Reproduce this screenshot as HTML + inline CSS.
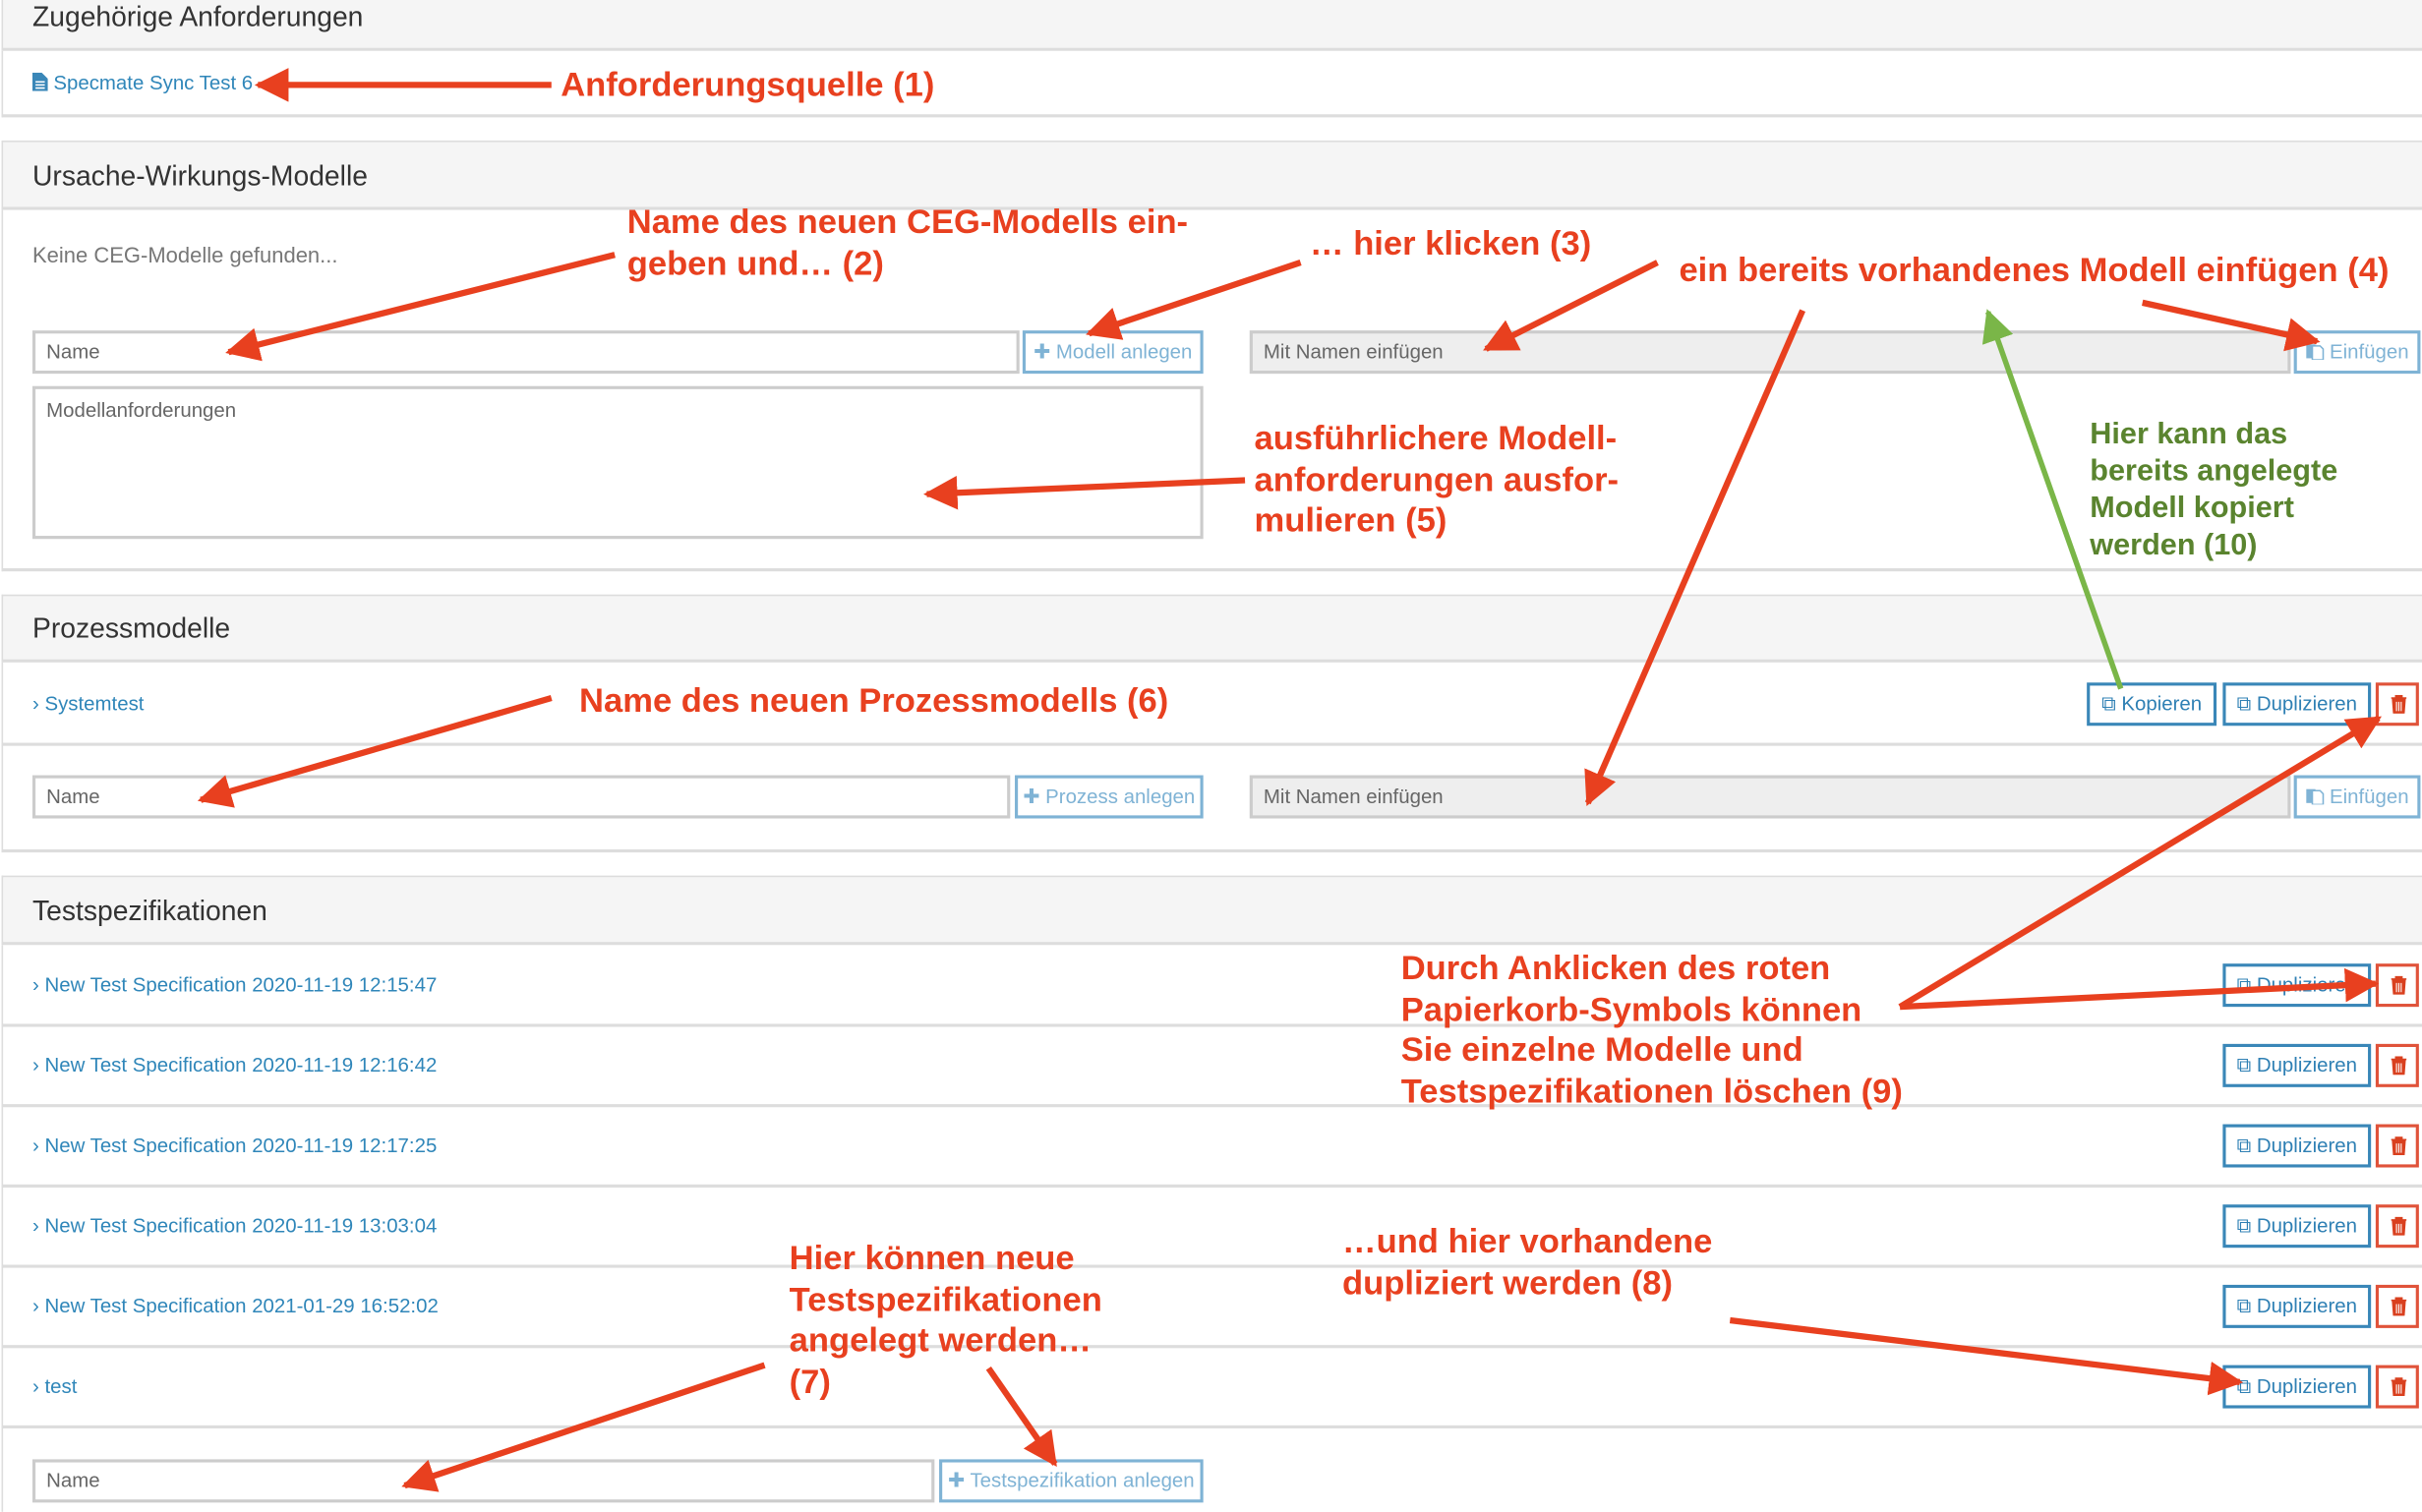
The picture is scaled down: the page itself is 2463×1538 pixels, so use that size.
<!DOCTYPE html>
<html><head><meta charset="utf-8">
<style>
html,body{margin:0;padding:0;background:#fff;overflow:hidden;width:2463px;height:1538px}
#w{position:absolute;left:0;top:0;width:1568px;height:979px;transform:scale(1.5708);transform-origin:0 0;font-family:"Liberation Sans",sans-serif;font-size:13px;color:#333}
.a{position:absolute}
.hd{position:absolute;left:1px;right:0;background:#f5f5f5;border-top:1px solid #ddd;border-bottom:2px solid #ddd;border-left:1px solid #ddd;font-size:18px;color:#333;padding-left:19px;box-sizing:border-box}
.bd{position:absolute;left:1px;right:0;border-left:1px solid #ddd;border-bottom:2px solid #ddd;background:#fff}
.ln{position:absolute;left:1px;right:0;height:2px;background:#ddd}
.lk{position:absolute;color:#2f86b9;font-size:13px}
.in{position:absolute;border:2px solid #ccc;box-sizing:border-box;color:#666;font-size:13px;padding-left:7px;line-height:23px;background:#fff}
.gr{background:#eee}
.bt{position:absolute;border:2px solid #7fb3d5;box-sizing:border-box;color:#7fb3d5;font-size:13px;text-align:center;line-height:23px;background:#fff}
.bb{position:absolute;border:2px solid #3a87b8;box-sizing:border-box;color:#2f80b4;font-size:13px;text-align:center;line-height:23px;background:#fff}
.tr{position:absolute;border:2px solid #e0533a;box-sizing:border-box;text-align:center;background:#fff;width:28px;height:28px}
.tr svg{position:absolute;left:8px;top:6px}
.an{position:absolute;color:#e8401f;font-weight:bold;font-size:22px;line-height:26.5px;white-space:nowrap}
.gn{position:absolute;color:#5a842f;font-weight:bold;font-size:19.5px;line-height:24px;white-space:nowrap}
</style></head><body><div id="w">

<div class="hd" style="top:-1px;height:34px;line-height:22px">Zugehörige Anforderungen</div>
<div class="bd" style="top:33px;height:41px"></div>
<div class="lk" style="left:21px;top:46px"><svg width="10" height="12" viewBox="0 0 10 12" style="vertical-align:-1px"><path d="M0 0h6l4 4v8H0z" fill="#3a87b8"/><path d="M2 6h6M2 8h6M2 10h6" stroke="#fff" stroke-width="1"/></svg> Specmate Sync Test 6</div>

<div class="hd" style="top:91px;height:45px;line-height:44px">Ursache-Wirkungs-Modelle</div>
<div class="bd" style="top:136px;height:232px"></div>
<div class="a" style="left:21px;top:157px;color:#777;font-size:14px">Keine CEG-Modelle gefunden...</div>
<div class="in" style="left:21px;top:214px;width:639px;height:28px">Name</div>
<div class="bt" style="left:662px;top:214px;width:117px;height:28px">✚ Modell anlegen</div>
<div class="in gr" style="left:809px;top:214px;width:674px;height:28px">Mit Namen einfügen</div>
<div class="bt" style="left:1485px;top:214px;width:82px;height:28px"><svg width="12" height="12" viewBox="0 0 12 12" style="vertical-align:-1px"><rect x="0" y="2" width="6" height="9" fill="#7fb3d5"/><path d="M4 3h5l2 2v7H4z" fill="#fff" stroke="#7fb3d5"/></svg> Einfügen</div>
<div class="in" style="left:21px;top:250px;width:758px;height:99px;line-height:28px">Modellanforderungen</div>

<div class="hd" style="top:385px;height:44px;line-height:43px">Prozessmodelle</div>
<div class="bd" style="top:429px;height:121px"></div>
<div class="ln" style="top:481px"></div>
<div class="lk" style="left:21px;top:448px">› Systemtest</div>
<div class="bb" style="left:1351px;top:442px;width:84px;height:28px">⧉ Kopieren</div>
<div class="bb" style="left:1439px;top:442px;width:96px;height:28px">⧉ Duplizieren</div>
<div class="tr" style="left:1538px;top:442px"><svg width="10" height="12" viewBox="0 0 10 12"><path d="M0 2h10M3 2V0.5h4V2M1 3h8l-0.7 9H1.7z" fill="#d9401f" stroke="#d9401f" stroke-width="1"/><path d="M3.5 4.5v6M5 4.5v6M6.5 4.5v6" stroke="#fff" stroke-width="0.7"/></svg></div>
<div class="in" style="left:21px;top:502px;width:633px;height:28px">Name</div>
<div class="bt" style="left:657px;top:502px;width:122px;height:28px">✚ Prozess anlegen</div>
<div class="in gr" style="left:809px;top:502px;width:674px;height:28px">Mit Namen einfügen</div>
<div class="bt" style="left:1485px;top:502px;width:82px;height:28px"><svg width="12" height="12" viewBox="0 0 12 12" style="vertical-align:-1px"><rect x="0" y="2" width="6" height="9" fill="#7fb3d5"/><path d="M4 3h5l2 2v7H4z" fill="#fff" stroke="#7fb3d5"/></svg> Einfügen</div>

<div class="hd" style="top:567px;height:45px;line-height:44px">Testspezifikationen</div>
<div class="bd" style="top:612px;height:367px;border-bottom:none"></div>
<div class="ln" style="top:663px"></div><div class="ln" style="top:715px"></div><div class="ln" style="top:767px"></div><div class="ln" style="top:819px"></div><div class="ln" style="top:871px"></div><div class="ln" style="top:923px"></div>
<div class="lk" style="left:21px;top:630px">› New Test Specification 2020-11-19 12:15:47</div>
<div class="lk" style="left:21px;top:682px">› New Test Specification 2020-11-19 12:16:42</div>
<div class="lk" style="left:21px;top:734px">› New Test Specification 2020-11-19 12:17:25</div>
<div class="lk" style="left:21px;top:786px">› New Test Specification 2020-11-19 13:03:04</div>
<div class="lk" style="left:21px;top:838px">› New Test Specification 2021-01-29 16:52:02</div>
<div class="lk" style="left:21px;top:890px">› test</div>
<div class="bb" style="left:1439px;top:624px;width:96px;height:28px">⧉ Duplizieren</div>
<div class="bb" style="left:1439px;top:676px;width:96px;height:28px">⧉ Duplizieren</div>
<div class="bb" style="left:1439px;top:728px;width:96px;height:28px">⧉ Duplizieren</div>
<div class="bb" style="left:1439px;top:780px;width:96px;height:28px">⧉ Duplizieren</div>
<div class="bb" style="left:1439px;top:832px;width:96px;height:28px">⧉ Duplizieren</div>
<div class="bb" style="left:1439px;top:884px;width:96px;height:28px">⧉ Duplizieren</div>
<div class="tr" style="left:1538px;top:624px"><svg width="10" height="12" viewBox="0 0 10 12"><path d="M0 2h10M3 2V0.5h4V2M1 3h8l-0.7 9H1.7z" fill="#d9401f" stroke="#d9401f" stroke-width="1"/><path d="M3.5 4.5v6M5 4.5v6M6.5 4.5v6" stroke="#fff" stroke-width="0.7"/></svg></div>
<div class="tr" style="left:1538px;top:676px"><svg width="10" height="12" viewBox="0 0 10 12"><path d="M0 2h10M3 2V0.5h4V2M1 3h8l-0.7 9H1.7z" fill="#d9401f" stroke="#d9401f" stroke-width="1"/><path d="M3.5 4.5v6M5 4.5v6M6.5 4.5v6" stroke="#fff" stroke-width="0.7"/></svg></div>
<div class="tr" style="left:1538px;top:728px"><svg width="10" height="12" viewBox="0 0 10 12"><path d="M0 2h10M3 2V0.5h4V2M1 3h8l-0.7 9H1.7z" fill="#d9401f" stroke="#d9401f" stroke-width="1"/><path d="M3.5 4.5v6M5 4.5v6M6.5 4.5v6" stroke="#fff" stroke-width="0.7"/></svg></div>
<div class="tr" style="left:1538px;top:780px"><svg width="10" height="12" viewBox="0 0 10 12"><path d="M0 2h10M3 2V0.5h4V2M1 3h8l-0.7 9H1.7z" fill="#d9401f" stroke="#d9401f" stroke-width="1"/><path d="M3.5 4.5v6M5 4.5v6M6.5 4.5v6" stroke="#fff" stroke-width="0.7"/></svg></div>
<div class="tr" style="left:1538px;top:832px"><svg width="10" height="12" viewBox="0 0 10 12"><path d="M0 2h10M3 2V0.5h4V2M1 3h8l-0.7 9H1.7z" fill="#d9401f" stroke="#d9401f" stroke-width="1"/><path d="M3.5 4.5v6M5 4.5v6M6.5 4.5v6" stroke="#fff" stroke-width="0.7"/></svg></div>
<div class="tr" style="left:1538px;top:884px"><svg width="10" height="12" viewBox="0 0 10 12"><path d="M0 2h10M3 2V0.5h4V2M1 3h8l-0.7 9H1.7z" fill="#d9401f" stroke="#d9401f" stroke-width="1"/><path d="M3.5 4.5v6M5 4.5v6M6.5 4.5v6" stroke="#fff" stroke-width="0.7"/></svg></div>
<div class="in" style="left:21px;top:945px;width:584px;height:28px">Name</div>
<div class="bt" style="left:608px;top:945px;width:171px;height:28px">✚ Testspezifikation anlegen</div>

<div class="an" style="left:363px;top:42px">Anforderungsquelle (1)</div>
<div class="an" style="left:406px;top:131px">Name des neuen CEG-Modells ein-<br>geben und… (2)</div>
<div class="an" style="left:848px;top:145px">… hier klicken (3)</div>
<div class="an" style="left:1087px;top:162px">ein bereits vorhandenes Modell einfügen (4)</div>
<div class="an" style="left:812px;top:271px">ausführlichere Modell-<br>anforderungen ausfor-<br>mulieren (5)</div>
<div class="an" style="left:375px;top:441px">Name des neuen Prozessmodells (6)</div>
<div class="an" style="left:907px;top:614px">Durch Anklicken des roten<br>Papierkorb-Symbols können<br>Sie einzelne Modelle und<br>Testspezifikationen löschen (9)</div>
<div class="an" style="left:511px;top:802px">Hier können neue<br>Testspezifikationen<br>angelegt werden…<br>(7)</div>
<div class="an" style="left:869px;top:791px">…und hier vorhandene<br>dupliziert werden (8)</div>
<div class="gn" style="left:1353px;top:269px">Hier kann das<br>bereits angelegte<br>Modell kopiert<br>werden (10)</div>

<svg class="a" style="left:0;top:0" width="1568" height="979">
<defs>
<marker id="r" viewBox="0 0 10 10" refX="9" refY="5" markerWidth="5.5" markerHeight="5.5" orient="auto"><path d="M0 0L10 5L0 10z" fill="#e8401f"/></marker>
<marker id="g" viewBox="0 0 10 10" refX="9" refY="5" markerWidth="6" markerHeight="6" orient="auto"><path d="M0 0L10 5L0 10z" fill="#7ab648"/></marker>
</defs>
<g stroke="#e8401f" stroke-width="4" marker-end="url(#r)" fill="none">
<line x1="357" y1="55" x2="167" y2="55"/>
<line x1="398" y1="165" x2="148" y2="228"/>
<line x1="842" y1="170" x2="705" y2="216"/>
<line x1="1073" y1="170" x2="962" y2="226"/>
<line x1="1387" y1="196" x2="1500" y2="221"/>
<line x1="1167" y1="201" x2="1028" y2="520"/>
<line x1="806" y1="311" x2="600" y2="320"/>
<line x1="357" y1="452" x2="130" y2="518"/>
<line x1="495" y1="884" x2="262" y2="962"/>
<line x1="640" y1="886" x2="683" y2="948"/>
<line x1="1120" y1="855" x2="1450" y2="895"/>
<line x1="1230" y1="652" x2="1538" y2="637"/>
<line x1="1230" y1="652" x2="1540" y2="465"/>
</g>
<line x1="1373" y1="446" x2="1287" y2="202" stroke="#7ab648" stroke-width="3.5" marker-end="url(#g)"/>
</svg>
</div></body></html>
